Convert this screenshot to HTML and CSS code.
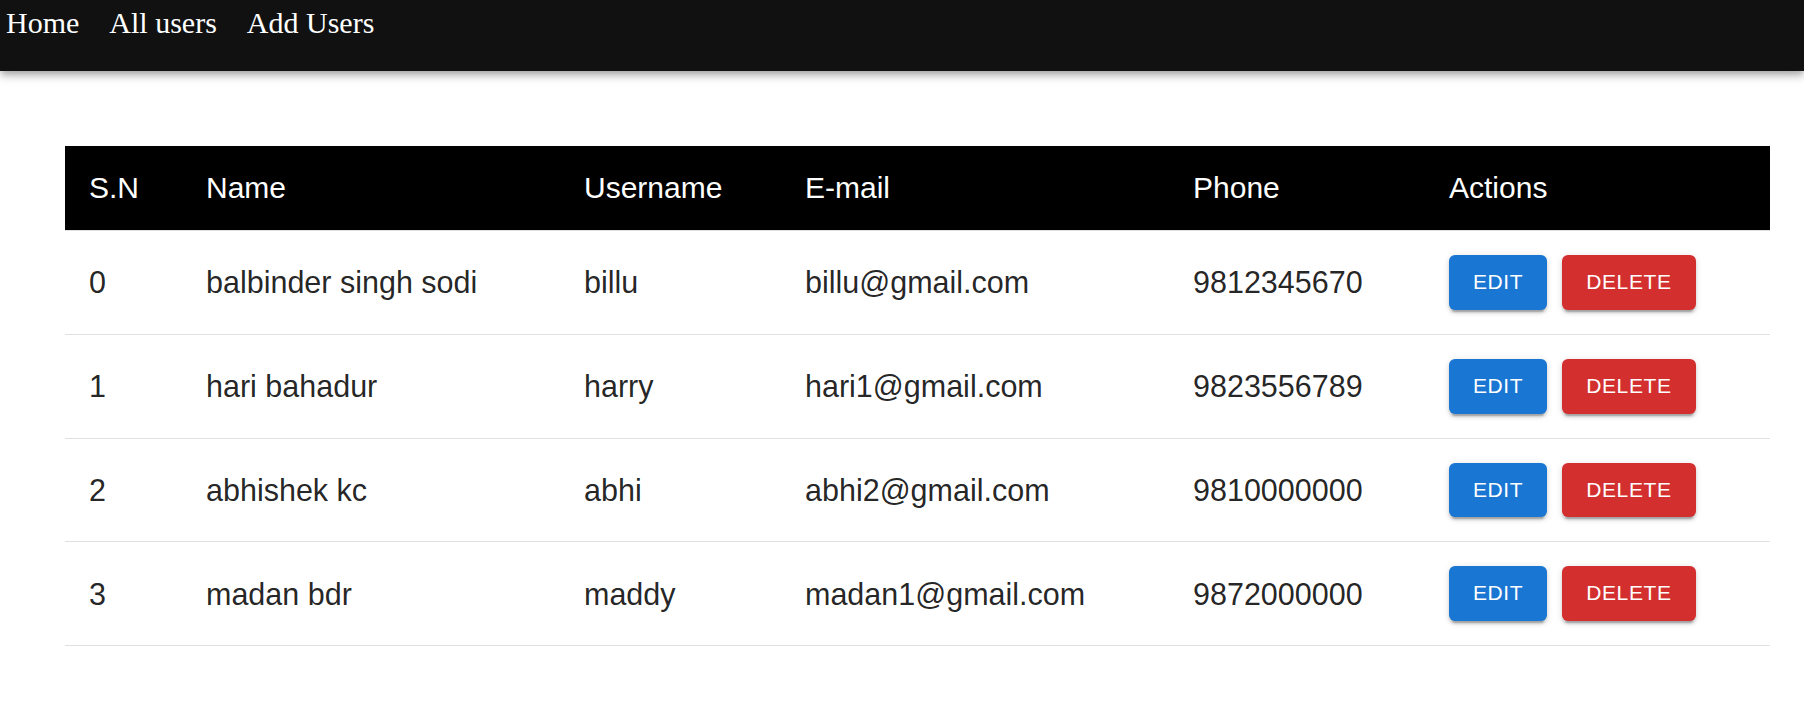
FILE: index.html
```html
<!DOCTYPE html>
<html lang="en">
<head>
<meta charset="utf-8">
<title>All users</title>
<link rel="stylesheet" href="styles.css">
</head>
<body>
<nav class="topbar">
  <a class="nav-link" href="#">Home</a>
  <a class="nav-link" href="#">All users</a>
  <a class="nav-link" href="#">Add Users</a>
</nav>
<main class="content">
  <table class="users">
    <colgroup>
      <col class="c-sn"><col class="c-name"><col class="c-user"><col class="c-mail"><col class="c-phone"><col class="c-act">
    </colgroup>
    <thead>
      <tr><th>S.N</th><th>Name</th><th>Username</th><th>E-mail</th><th>Phone</th><th>Actions</th></tr>
    </thead>
    <tbody>
      <tr><td>0</td><td>balbinder singh sodi</td><td>billu</td><td>billu@gmail.com</td><td>9812345670</td>
        <td><div class="actions"><button class="btn edit">Edit</button><button class="btn delete">Delete</button></div></td></tr>
      <tr><td>1</td><td>hari bahadur</td><td>harry</td><td>hari1@gmail.com</td><td>9823556789</td>
        <td><div class="actions"><button class="btn edit">Edit</button><button class="btn delete">Delete</button></div></td></tr>
      <tr><td>2</td><td>abhishek kc</td><td>abhi</td><td>abhi2@gmail.com</td><td>9810000000</td>
        <td><div class="actions"><button class="btn edit">Edit</button><button class="btn delete">Delete</button></div></td></tr>
      <tr><td>3</td><td>madan bdr</td><td>maddy</td><td>madan1@gmail.com</td><td>9872000000</td>
        <td><div class="actions"><button class="btn edit">Edit</button><button class="btn delete">Delete</button></div></td></tr>
    </tbody>
  </table>
</main>
</body>
</html>
```
FILE: styles.css
```css
html, body {
  margin: 0;
  padding: 0;
  background: #fff;
}
body {
  font-family: "Liberation Serif", "Times New Roman", serif;
}
.topbar {
  height: 71px;
  background: #111111;
  display: flex;
  align-items: flex-start;
  gap: 30px;
  padding: 6px 0 0 6px;
  box-sizing: border-box;
  box-shadow: 0 3px 6px -1.5px rgba(0,0,0,0.2), 0 6px 7.5px 0 rgba(0,0,0,0.14), 0 1.5px 15px 0 rgba(0,0,0,0.12);
  position: relative;
  z-index: 1;
}
.nav-link {
  color: #ffffff;
  text-decoration: none;
  font-family: "Liberation Serif", "Times New Roman", serif;
  font-size: 30px;
  line-height: normal;
}
.content {
  padding: 75px 0 0 65px;
}
.users {
  width: 1705px;
  border-collapse: collapse;
  table-layout: fixed;
  font-family: "Liberation Sans", Arial, Helvetica, sans-serif;
  font-size: 30px;
}
.c-sn { width: 117px; }
.c-name { width: 378px; }
.c-user { width: 221px; }
.c-mail { width: 388px; }
.c-phone { width: 256px; }
.c-act { width: 345px; }
.users th {
  background: #000;
  color: #fff;
  font-weight: 400;
  text-align: left;
  padding: 24px 24px;
  line-height: 36px;
  border-bottom: 1px solid #e0e0e0;
  vertical-align: middle;
}
.users td {
  color: rgba(0,0,0,0.87);
  font-size: 30.5px;
  padding: 24px 24px;
  line-height: 36px;
  border-bottom: 1px solid #e0e0e0;
  vertical-align: middle;
  white-space: nowrap;
}
.actions {
  display: flex;
  gap: 15px;
}
.btn {
  font-family: "Liberation Sans", Arial, Helvetica, sans-serif;
  font-size: 21px;
  font-weight: 400;
  line-height: 1.75;
  letter-spacing: 0.6px;
  text-transform: uppercase;
  color: #fff;
  border: 0;
  border-radius: 6px;
  padding: 9px 24px;
  cursor: pointer;
  box-shadow: 0 4.5px 1.5px -3px rgba(0,0,0,0.2), 0 3px 3px 0 rgba(0,0,0,0.14), 0 1.5px 7.5px 0 rgba(0,0,0,0.12);
}
.edit { background: #1976d2; }
.delete { background: #d32f2f; }
```
